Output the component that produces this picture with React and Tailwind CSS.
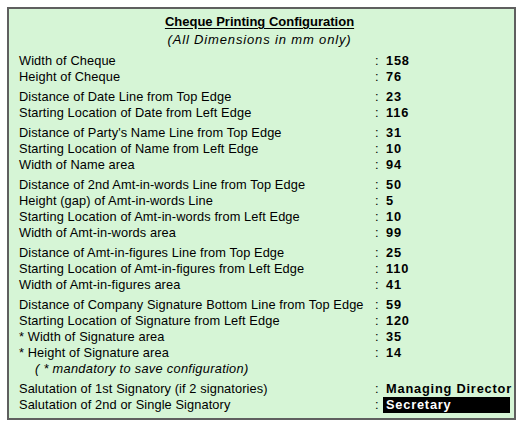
import React from 'react';

const groups = [
  [
    ['Width of Cheque', '158'],
    ['Height of Cheque', '76'],
  ],
  [
    ['Distance of Date Line from Top Edge', '23'],
    ['Starting Location of Date from Left Edge', '116'],
  ],
  [
    ["Distance of Party's Name Line from Top Edge", '31'],
    ['Starting Location of Name from Left Edge', '10'],
    ['Width of Name area', '94'],
  ],
  [
    ['Distance of 2nd Amt-in-words Line from Top Edge', '50'],
    ['Height (gap) of Amt-in-words Line', '5'],
    ['Starting Location of Amt-in-words from Left Edge', '10'],
    ['Width of Amt-in-words area', '99'],
  ],
  [
    ['Distance of Amt-in-figures Line from Top Edge', '25'],
    ['Starting Location of Amt-in-figures from Left Edge', '110'],
    ['Width of Amt-in-figures area', '41'],
  ],
  [
    ['Distance of Company Signature Bottom Line from Top Edge', '59'],
    ['Starting Location of Signature from Left Edge', '120'],
    ['* Width of Signature area', '35'],
    ['* Height of Signature area', '14'],
  ],
];

function Row({ label, value, selected }) {
  return (
    <div className="flex h-4 items-center leading-4">
      <div className="w-[356px] shrink-0 whitespace-nowrap tracking-[0.1px]">{label}</div>
      <div className="w-[8px] shrink-0">:</div>
      {selected ? (
        <div className="bg-black text-white font-bold tracking-[0.8px] pl-[3px] w-[127px] h-4">{value}</div>
      ) : (
        <div className="pl-[3px] font-bold tracking-[0.8px] whitespace-nowrap">{value}</div>
      )}
    </div>
  );
}

export default function App() {
  return (
    <div className="w-[523px] h-[426px] bg-white p-[7px] text-black" style={{ fontFamily: '"Liberation Sans", Arial, sans-serif' }}>
      <div className="w-[509px] h-[413px] border-2 border-[#5f5f5f] bg-[#d6f5d6] pl-[10px] pt-[5px] text-[12.8px]">
        <div className="flex flex-col items-center pr-[14px]">
          <div className="font-bold text-[13px] leading-4 underline underline-offset-2 h-[18px]">Cheque Printing Configuration</div>
          <div className="italic leading-4 text-[13px] tracking-[0.85px]">(All Dimensions in mm only)</div>
        </div>
        <div className="mt-[5px] flex flex-col gap-1">
          {groups.map((g, i) => (
            <div key={i}>
              {g.map(([l, v]) => (
                <Row key={l} label={l} value={v} />
              ))}
              {i === groups.length - 1 && (
                <div className="h-4 leading-4 italic pl-4 tracking-[0.3px]">( * mandatory to save configuration)</div>
              )}
            </div>
          ))}
          <div>
            <Row label="Salutation of 1st Signatory (if 2 signatories)" value="Managing Director" />
            <Row label="Salutation of 2nd or Single Signatory" value="Secretary" selected />
          </div>
        </div>
      </div>
    </div>
  );
}
